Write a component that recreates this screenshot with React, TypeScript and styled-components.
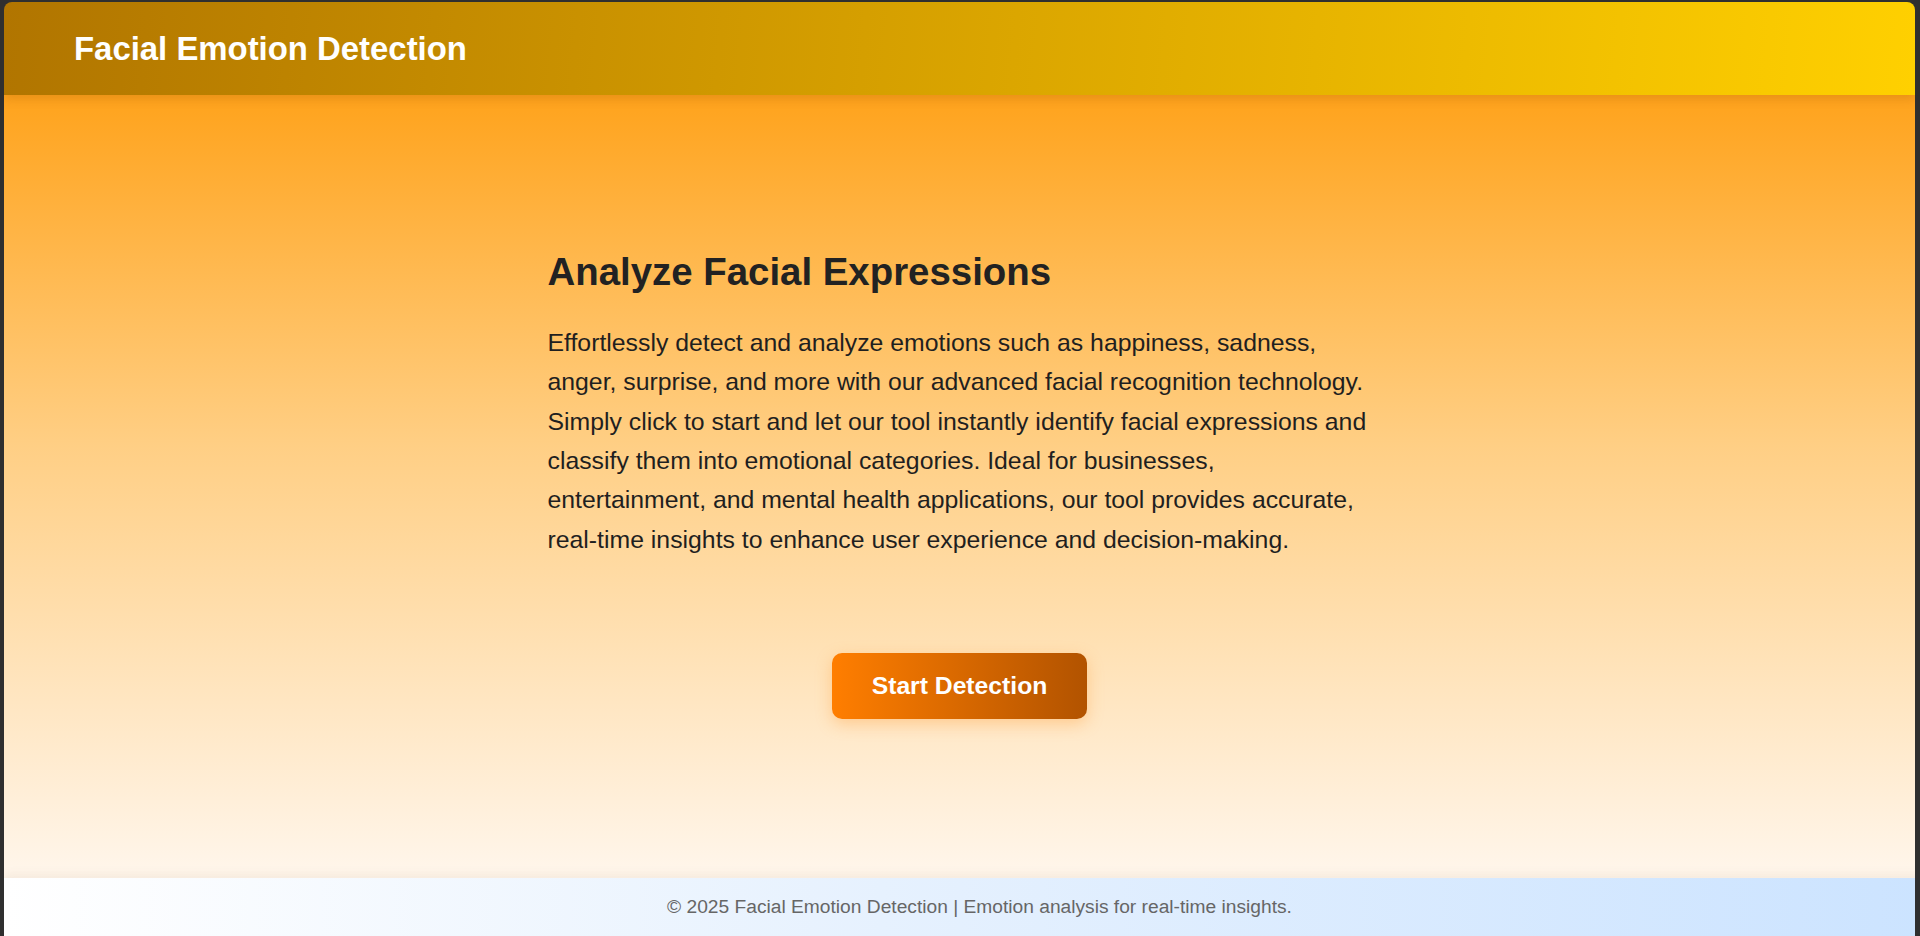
import React from "react";
import styled, { createGlobalStyle } from "styled-components";

const GlobalStyle = createGlobalStyle`
  html, body {
    margin: 0;
    padding: 0;
    height: 100%;
    overflow: hidden;
    background: #2f2f2f;
  }
  #root {
    height: 100%;
  }
  * {
    box-sizing: border-box;
  }
`;

const Frame = styled.div`
  height: 100vh;
  padding: 2px 5px 0 4px;
  background: #2f2f2f;
  display: flex;
`;

const AppShell = styled.div`
  flex: 1;
  display: flex;
  flex-direction: column;
  border-radius: 8px 8px 0 0;
  overflow: hidden;
  font-family: "Liberation Sans", Arial, Helvetica, sans-serif;
`;

const Header = styled.header`
  position: relative;
  z-index: 2;
  height: 93px;
  flex-shrink: 0;
  display: flex;
  align-items: center;
  padding: 0 70px;
  background: linear-gradient(95deg, #b17500 0%, #d59f00 45%, #ffd000 100%);
  box-shadow: 0 4px 10px rgba(120, 60, 0, 0.18);
`;

const Title = styled.h1`
  margin: 0;
  font-size: 32.9px;
  font-weight: 700;
  color: #ffffff;
`;

const Main = styled.main`
  flex: 1;
  display: flex;
  flex-direction: column;
  align-items: center;
  justify-content: center;
  padding-bottom: 4px;
  background: linear-gradient(to bottom, #ffa31c 0%, #ffcf85 45%, #fff6ec 100%);
`;

const Intro = styled.section`
  width: 824px;
`;

const Heading = styled.h2`
  margin: 0 0 29px;
  font-size: 38.4px;
  font-weight: 700;
  color: #222222;
`;

const Description = styled.p`
  margin: 0;
  font-size: 24.8px;
  line-height: 39.4px;
  color: #1f1f1f;
`;

const StartButton = styled.button`
  margin-top: 94px;
  padding: 19px 40px;
  border: none;
  border-radius: 10px;
  font-family: inherit;
  font-size: 24.7px;
  font-weight: 700;
  color: #ffffff;
  cursor: pointer;
  background: linear-gradient(90deg, #ff7e00 0%, #b25300 100%);
  box-shadow: 0 5px 16px rgba(255, 150, 40, 0.35);
`;

const Footer = styled.footer`
  position: relative;
  z-index: 2;
  flex-shrink: 0;
  box-sizing: content-box;
  width: 100%;
  padding: 18px 20px;
  line-height: 22px;
  text-align: center;
  font-size: 19.2px;
  color: #666666;
  background: linear-gradient(90deg, #ffffff 0%, #e6f1fe 45%, #cbe3ff 100%);
  box-shadow: 0 -3px 10px rgba(120, 80, 30, 0.08);
`;

export default function App() {
  return (
    <>
      <GlobalStyle />
      <Frame>
        <AppShell>
          <Header>
            <Title>Facial Emotion Detection</Title>
          </Header>
          <Main>
            <Intro>
              <Heading>Analyze Facial Expressions</Heading>
              <Description>
                Effortlessly detect and analyze emotions such as happiness, sadness, anger, surprise, and more
                with our advanced facial recognition technology. Simply click to start and let our tool instantly
                identify facial expressions and classify them into emotional categories. Ideal for businesses,
                entertainment, and mental health applications, our tool provides accurate, real-time insights to
                enhance user experience and decision-making.
              </Description>
            </Intro>
            <StartButton>Start Detection</StartButton>
          </Main>
          <Footer>© 2025 Facial Emotion Detection | Emotion analysis for real-time insights.</Footer>
        </AppShell>
      </Frame>
    </>
  );
}
